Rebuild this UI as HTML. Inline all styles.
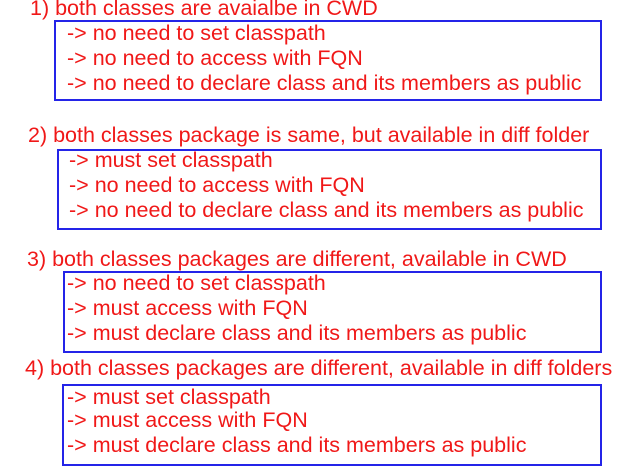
<!DOCTYPE html>
<html><head><style>
body{margin:0;width:643px;height:475px;background:#fff;position:relative;overflow:hidden;font-family:"Liberation Sans",Arial,sans-serif;color:#f01818;font-size:21.5px}
.h{position:absolute;white-space:nowrap;line-height:24px}
.b{position:absolute;border:2px solid #2424e8;box-sizing:border-box}
.l{position:absolute;white-space:nowrap;line-height:24px}
</style></head><body>
<div class="h" style="left:30px;top:-4px">1) both classes are avaialbe in CWD</div>
<div class="b" style="left:54px;top:20px;width:548px;height:81px"></div>
<div class="l" style="left:67px;top:21px">-&gt; no need to set classpath</div>
<div class="l" style="left:67px;top:46px">-&gt; no need to access with FQN</div>
<div class="l" style="left:67px;top:71px">-&gt; no need to declare class and its members as public</div>

<div class="h" style="left:28px;top:123px">2) both classes package is same, but available in diff folder</div>
<div class="b" style="left:57px;top:149px;width:545px;height:81px"></div>
<div class="l" style="left:69px;top:148px">-&gt; must set classpath</div>
<div class="l" style="left:69px;top:173px">-&gt; no need to access with FQN</div>
<div class="l" style="left:69px;top:198px">-&gt; no need to declare class and its members as public</div>

<div class="h" style="left:27px;top:247px">3) both classes packages are different, available in CWD</div>
<div class="b" style="left:63px;top:271px;width:539px;height:82px"></div>
<div class="l" style="left:67px;top:271px">-&gt; no need to set classpath</div>
<div class="l" style="left:67px;top:296px">-&gt; must access with FQN</div>
<div class="l" style="left:67px;top:321px">-&gt; must declare class and its members as public</div>

<div class="h" style="left:25px;top:356px">4) both classes packages are different, available in diff folders</div>
<div class="b" style="left:62px;top:384px;width:540px;height:82px"></div>
<div class="l" style="left:67px;top:385px">-&gt; must set classpath</div>
<div class="l" style="left:67px;top:408px">-&gt; must access with FQN</div>
<div class="l" style="left:67px;top:433px">-&gt; must declare class and its members as public</div>
</body></html>
